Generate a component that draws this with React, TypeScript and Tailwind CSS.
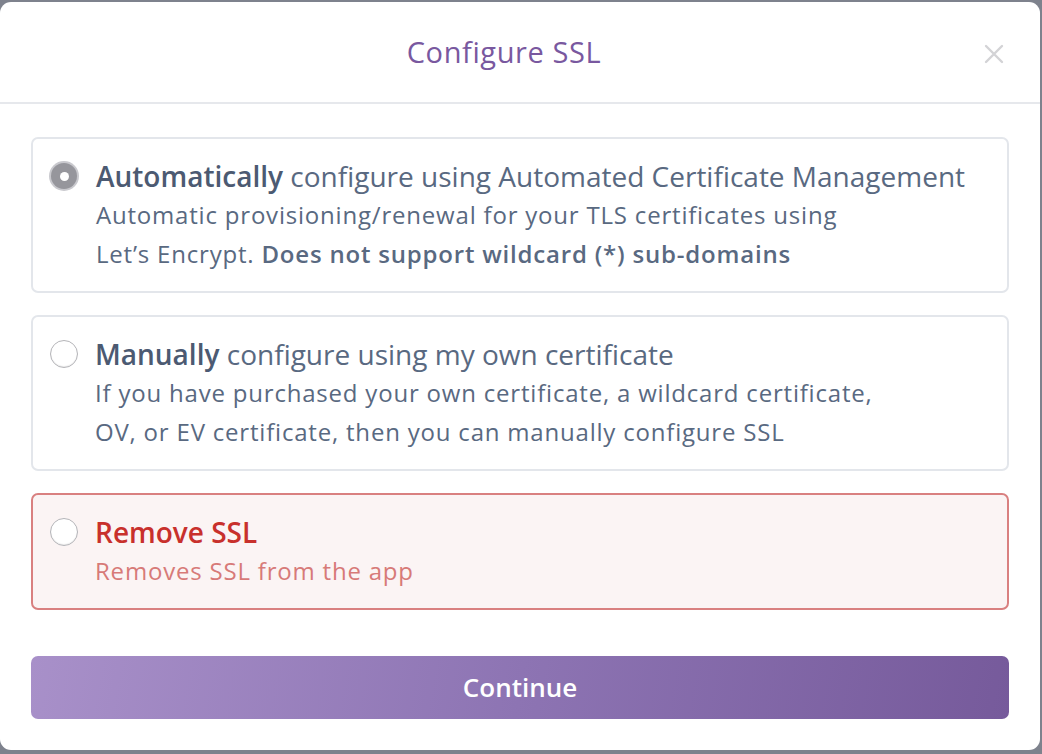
import { useState } from 'react'

type Choice = 'auto' | 'manual' | 'remove'

function Radio({ checked }: { checked: boolean }) {
  if (checked) {
    return (
      <span className="mt-[4px] flex h-[30px] w-[30px] shrink-0 items-center justify-center rounded-full bg-[#c9c9ce]">
        <span className="flex h-[26px] w-[26px] items-center justify-center rounded-full bg-[#96969c]">
          <span className="h-[9px] w-[9px] rounded-full bg-white" />
        </span>
      </span>
    )
  }
  return (
    <span className="mt-[5px] ml-[1px] h-[28px] w-[28px] shrink-0 rounded-full border border-[#b4b4b8] bg-white shadow-[inset_0_-1px_1px_rgba(0,0,0,0.08)]" />
  )
}

export default function App() {
  const [choice, setChoice] = useState<Choice>('auto')

  return (
    <div
      className="h-[754px] w-[1042px] overflow-hidden bg-[#7e828d] pt-[2px]"
      style={{ fontFamily: '"Open Sans", Lato, sans-serif' }}
    >
      <div className="flex h-[748px] w-[1040px] flex-col rounded-[11px] bg-white">
        {/* Header */}
        <div className="relative flex h-[102px] shrink-0 items-center justify-center border-b-2 border-[#e6e8ec] pr-[32px]">
          <h1 className="text-[29px] font-normal tracking-[0.6px] text-[#79589f]">Configure SSL</h1>
          <button className="absolute right-[36px] top-[42px] text-[#d3d3d6]">
            <svg width="20" height="20" viewBox="0 0 20 20" fill="none" stroke="currentColor" strokeWidth="2.4" strokeLinecap="round">
              <path d="M2 2 L18 18 M18 2 L2 18" />
            </svg>
          </button>
        </div>

        {/* Options */}
        <div className="flex flex-col gap-[22px] px-[31px] pt-[33px]">
          <label
            onClick={() => setChoice('auto')}
            className="flex cursor-pointer gap-[17px] rounded-[7px] border-2 border-[#e3e6eb] py-[18px] pl-[16px] pr-[16px]"
          >
            <Radio checked={choice === 'auto'} />
            <div className="text-[#596981]">
              <div className="text-[28px] leading-[38px]">
                <span className="font-semibold text-[#4c5a72]">Automatically</span> configure using Automated Certificate Management
              </div>
              <div className="text-[24px] leading-[39px] tracking-[0.8px]">
                Automatic provisioning/renewal for your TLS certificates using
                <br />
                Let’s Encrypt. <span className="font-semibold">Does not support wildcard (*) sub-domains</span>
              </div>
            </div>
          </label>

          <label
            onClick={() => setChoice('manual')}
            className="flex cursor-pointer gap-[17px] rounded-[7px] border-2 border-[#e3e6eb] py-[18px] pl-[16px] pr-[16px]"
          >
            <Radio checked={choice === 'manual'} />
            <div className="text-[#596981]">
              <div className="text-[28px] leading-[38px]">
                <span className="font-semibold text-[#4c5a72]">Manually</span> configure using my own certificate
              </div>
              <div className="text-[24px] leading-[39px] tracking-[0.8px]">
                If you have purchased your own certificate, a wildcard certificate,
                <br />
                OV, or EV certificate, then you can manually configure SSL
              </div>
            </div>
          </label>

          <label
            onClick={() => setChoice('remove')}
            className="flex cursor-pointer gap-[17px] rounded-[7px] border-2 border-[#d98080] bg-[#fbf4f4] py-[18px] pl-[16px] pr-[16px]"
          >
            <Radio checked={choice === 'remove'} />
            <div>
              <div className="text-[28px] font-semibold leading-[38px] text-[#c8302c]">Remove SSL</div>
              <div className="text-[24px] leading-[39px] tracking-[0.8px] text-[#d77a78]">Removes SSL from the app</div>
            </div>
          </label>
        </div>

        {/* Footer */}
        <div className="px-[31px] pt-[46px]">
          <button className="flex h-[63px] w-full items-center justify-center rounded-[7px] bg-[linear-gradient(100deg,#a890c9_0%,#8d74b3_50%,#765a9b_100%)] text-[26px] font-semibold text-white">
            Continue
          </button>
        </div>
      </div>
    </div>
  )
}
